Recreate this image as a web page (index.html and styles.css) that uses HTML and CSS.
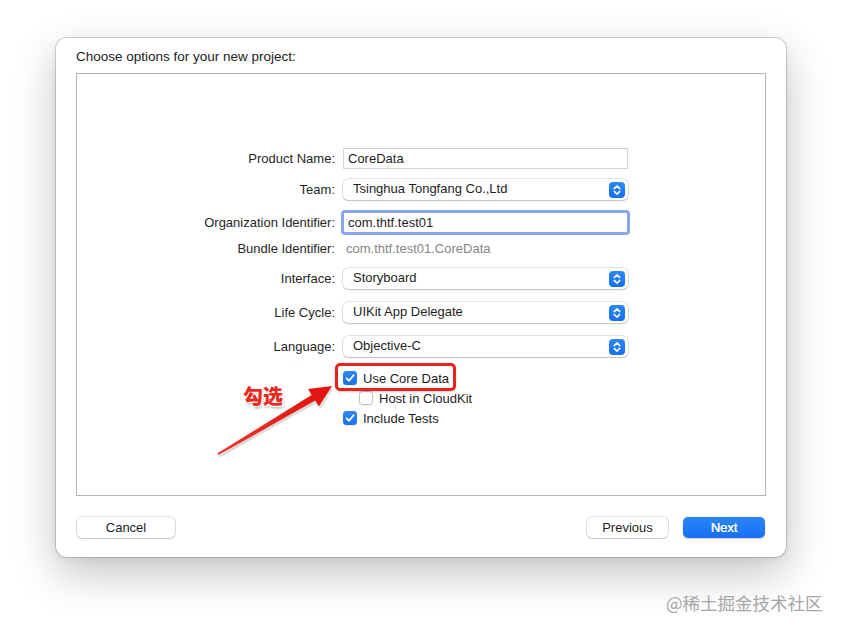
FILE: index.html
```html
<!DOCTYPE html>
<html>
<head>
<meta charset="utf-8">
<link rel="stylesheet" href="styles.css">
</head>
<body>
<div class="window">
  <div class="title">Choose options for your new project:</div>
  <div class="panel">
    <div class="form">
      <div class="row r1">
        <label class="lbl">Product Name:</label>
        <div class="field">CoreData</div>
      </div>
      <div class="row r2">
        <label class="lbl">Team:</label>
        <div class="popup"><span>Tsinghua Tongfang Co.,Ltd</span><i class="stepper"><svg viewBox="0 0 16 16" width="16" height="16"><path d="M5.2 6.6 L8 3.9 L10.8 6.6 M5.2 9.4 L8 12.1 L10.8 9.4" fill="none" stroke="#fff" stroke-width="1.5" stroke-linecap="round" stroke-linejoin="round"/></svg></i></div>
      </div>
      <div class="row r3">
        <label class="lbl">Organization Identifier:</label>
        <div class="field focus">com.thtf.test01</div>
      </div>
      <div class="row r4">
        <label class="lbl">Bundle Identifier:</label>
        <div class="value">com.thtf.test01.CoreData</div>
      </div>
      <div class="row r5">
        <label class="lbl">Interface:</label>
        <div class="popup"><span>Storyboard</span><i class="stepper"><svg viewBox="0 0 16 16" width="16" height="16"><path d="M5.2 6.6 L8 3.9 L10.8 6.6 M5.2 9.4 L8 12.1 L10.8 9.4" fill="none" stroke="#fff" stroke-width="1.5" stroke-linecap="round" stroke-linejoin="round"/></svg></i></div>
      </div>
      <div class="row r6">
        <label class="lbl">Life Cycle:</label>
        <div class="popup"><span>UIKit App Delegate</span><i class="stepper"><svg viewBox="0 0 16 16" width="16" height="16"><path d="M5.2 6.6 L8 3.9 L10.8 6.6 M5.2 9.4 L8 12.1 L10.8 9.4" fill="none" stroke="#fff" stroke-width="1.5" stroke-linecap="round" stroke-linejoin="round"/></svg></i></div>
      </div>
      <div class="row r7">
        <label class="lbl">Language:</label>
        <div class="popup"><span>Objective-C</span><i class="stepper"><svg viewBox="0 0 16 16" width="16" height="16"><path d="M5.2 6.6 L8 3.9 L10.8 6.6 M5.2 9.4 L8 12.1 L10.8 9.4" fill="none" stroke="#fff" stroke-width="1.5" stroke-linecap="round" stroke-linejoin="round"/></svg></i></div>
      </div>
      <div class="row crow c1">
        <span></span>
        <div class="check"><i class="box on"><svg viewBox="0 0 14 14" width="14" height="14"><path d="M3.6 7.3 L6 9.8 L10.6 4.2" fill="none" stroke="#fff" stroke-width="1.8" stroke-linecap="round" stroke-linejoin="round"/></svg></i><span>Use Core Data</span></div>
      </div>
      <div class="row crow">
        <span></span>
        <div class="check sub"><i class="box"></i><span>Host in CloudKit</span></div>
      </div>
      <div class="row crow">
        <span></span>
        <div class="check"><i class="box on"><svg viewBox="0 0 14 14" width="14" height="14"><path d="M3.6 7.3 L6 9.8 L10.6 4.2" fill="none" stroke="#fff" stroke-width="1.8" stroke-linecap="round" stroke-linejoin="round"/></svg></i><span>Include Tests</span></div>
      </div>
    </div>
  </div>
  <div class="buttons">
    <button class="btn cancel">Cancel</button>
    <div class="right">
      <button class="btn prev">Previous</button>
      <button class="btn next">Next</button>
    </div>
  </div>
</div>

<div class="redbox"></div>
<div class="tag">勾选</div>
<svg class="arrow" width="842" height="632" viewBox="0 0 842 632">
  <defs>
    <linearGradient id="ag" x1="218" y1="454" x2="331" y2="387" gradientUnits="userSpaceOnUse">
      <stop offset="0" stop-color="#f0362a"/>
      <stop offset="1" stop-color="#e0120c"/>
    </linearGradient>
  </defs>
  <polygon points="217.5,453.2 311.6,395.0 308.0,389.0 332,386 318.8,406.5 315.2,400.6 218.5,455.0" fill="#000" opacity="0.14" transform="translate(1.5,2.5)"/>
  <polygon points="217.5,453.2 311.6,395.0 308.0,389.0 332,386 318.8,406.5 315.2,400.6 218.5,455.0" fill="url(#ag)"/>
</svg>
<div class="watermark">@稀土掘金技术社区</div>
</body>
</html>
```

FILE: styles.css
```css
html, body {
  margin: 0;
  padding: 0;
  background: #ffffff;
}
body {
  width: 842px;
  height: 632px;
  position: relative;
  overflow: hidden;
  font-family: "Liberation Sans", Arial, sans-serif;
  font-size: 13px;
  color: #262626;
  padding-top: 38px;
  box-sizing: border-box;
}
.window {
  margin-left: 56px;
  width: 730px;
  height: 519px;
  box-sizing: border-box;
  background: #ffffff;
  border-radius: 11px;
  box-shadow: 0 0 0 1px rgba(0, 0, 0, 0.16), 0 16px 44px rgba(0, 0, 0, 0.24), 0 2px 8px rgba(0, 0, 0, 0.06);
  padding: 10px 20px 0 20px;
  display: flex;
  flex-direction: column;
}
.title {
  height: 16px;
  line-height: 17px;
  font-size: 13.5px;
  color: #222;
}
.panel {
  margin-top: 9px;
  height: 423px;
  box-sizing: border-box;
  border: 1px solid #b4b4b4;
}
.form {
  display: flex;
  flex-direction: column;
  padding-top: 74px;
}
.row {
  display: grid;
  grid-template-columns: 258px 285px;
  column-gap: 8px;
  align-items: center;
  height: 21px;
}
.lbl {
  text-align: right;
  color: #262626;
  line-height: 16px;
}
.r2 { margin-top: 10px; }
.r3 { margin-top: 11px; height: 23px; }
.r4 { margin-top: 7px; height: 16px; }
.r5 { margin-top: 11px; }
.r6 { margin-top: 13px; }
.r7 { margin-top: 13px; }
.c1 { margin-top: 11px; }
.crow { height: 20px; }

.field {
  height: 21px;
  box-sizing: border-box;
  border: 1px solid #d6d6d6;
  border-top-color: #c9c9c9;
  padding: 0 4px;
  line-height: 19px;
  color: #1e1e1e;
  background: #fff;
}
.field.focus {
  border: 1px solid #8aa8ee;
  box-shadow: 0 0 0 2px #88a6ec;
  border-radius: 2px;
}
.value {
  color: #858585;
  padding-left: 3px;
  line-height: 16px;
}
.popup {
  height: 21px;
  box-sizing: border-box;
  border-radius: 5px;
  background: #fff;
  box-shadow: 0 0 0 0.5px rgba(0, 0, 0, 0.22), 0 1px 1.5px rgba(0, 0, 0, 0.14);
  display: flex;
  align-items: center;
  justify-content: space-between;
  padding: 0 3px 0 10px;
  color: #1e1e1e;
}
.popup span {
  margin-top: -2px;
}
.stepper {
  width: 16px;
  height: 16px;
  border-radius: 4px;
  background: linear-gradient(#2b88f8, #1670f0);
  display: block;
}
.stepper svg { display: block; }

.check {
  display: flex;
  align-items: center;
  gap: 6px;
  color: #1e1e1e;
}
.check.sub { padding-left: 16px; }
.box {
  width: 14px;
  height: 14px;
  box-sizing: border-box;
  border-radius: 3.5px;
  border: 1px solid #c4c4c4;
  background: #fff;
  display: block;
  box-shadow: 0 0.5px 1px rgba(0, 0, 0, 0.08);
}
.box.on {
  border: none;
  background: linear-gradient(#2c86f6, #1a6fee);
}
.box svg { display: block; }

.buttons {
  margin-top: 21px;
  padding: 0 1px;
  display: flex;
  justify-content: space-between;
}
.right {
  display: flex;
  gap: 15px;
}
.btn {
  height: 21px;
  border: none;
  border-radius: 5px;
  background: #fff;
  box-shadow: 0 0 0 0.5px rgba(0, 0, 0, 0.24), 0 1px 1.5px rgba(0, 0, 0, 0.12);
  font-family: "Liberation Sans", Arial, sans-serif;
  font-size: 13px;
  color: #1e1e1e;
  padding: 0;
  line-height: 21px;
}
.cancel { width: 98px; }
.prev { width: 81px; }
.next {
  width: 82px;
  color: #fff;
  background: linear-gradient(#2a85f8, #1670f2);
  box-shadow: 0 0.5px 1.5px rgba(0, 0, 0, 0.2);
  text-shadow: 0.3px 0 0 #fff;
}

.redbox {
  position: absolute;
  left: 335px;
  top: 363px;
  width: 121px;
  height: 28px;
  box-sizing: border-box;
  border: 3px solid #e8231c;
  border-radius: 5px;
  box-shadow: 0 1px 2px rgba(0, 0, 0, 0.2);
}
.tag {
  position: absolute;
  left: 243px;
  top: 383px;
  font-family: "Noto Sans CJK SC", sans-serif;
  font-weight: 900;
  font-size: 20px;
  line-height: 26px;
  color: #ea2a1f;
  text-shadow: 1px 0 0 #fff, -1px 0 0 #fff, 0 1px 0 #fff, 0 -1px 0 #fff, 1px 1px 0 #fff, -1px -1px 0 #fff, 1px -1px 0 #fff, -1px 1px 0 #fff, 1px 2px 3px rgba(0, 0, 0, 0.4);
}
.arrow {
  position: absolute;
  left: 0;
  top: 0;
  pointer-events: none;
}
.watermark {
  position: absolute;
  left: 666px;
  top: 592px;
  font-family: "Noto Sans CJK SC", sans-serif;
  font-size: 17.5px;
  line-height: 22px;
  color: #a6a6a6;
}
```
